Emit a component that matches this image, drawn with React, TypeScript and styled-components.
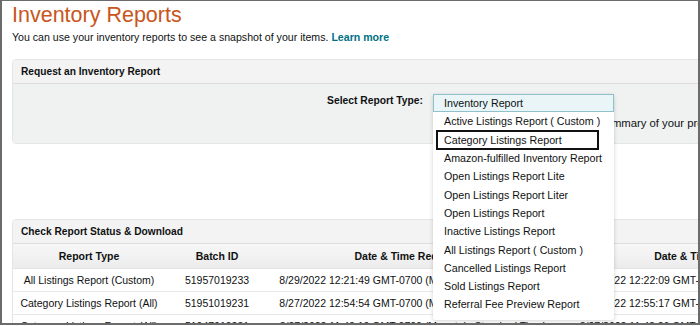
import React from 'react'
import styled, { createGlobalStyle } from 'styled-components'

const GlobalStyle = createGlobalStyle`
  html, body {
    margin: 0;
    padding: 0;
    background: #ffffff;
  }
  body {
    font-family: "Liberation Sans", Arial, sans-serif;
    color: #0f1111;
  }
`

const Frame = styled.div`
  box-sizing: border-box;
  width: 700px;
  height: 325px;
  border: 2px solid #6b6b6b;
  border-top-width: 1px;
  overflow: hidden;
  padding: 0 0 0 10px;
`

const Title = styled.h1`
  margin: 0;
  padding-top: 1px;
  font-size: 21.5px;
  line-height: 26px;
  font-weight: 400;
  color: #c8561c;
`

const Intro = styled.p`
  margin: 2px 0 0;
  font-size: 10.6px;
  line-height: 14px;
  color: #0f1111;
`

const LearnMore = styled.a`
  color: #007185;
  font-weight: 700;
  text-decoration: none;
`

const Panel = styled.section<{ $top: number }>`
  margin-top: ${(p) => p.$top}px;
  margin-right: -12px;
  border: 1px solid #e3e6e6;
  border-radius: 4px;
  background: #ffffff;
`

const PanelHeader = styled.div`
  height: 23px;
  display: flex;
  align-items: center;
  padding-left: 8px;
  background: #f3f3f3;
  border-bottom: 1px solid #dddddd;
  border-radius: 4px 4px 0 0;
  font-size: 10.2px;
  font-weight: 700;
`

const RequestBody = styled.div`
  height: 59px;
  background: #f0f2f2;
  border-radius: 0 0 4px 4px;
  display: grid;
  grid-template-columns: 410px 1fr;
  column-gap: 10px;
  padding-top: 10px;
  box-sizing: border-box;
`

const FieldLabel = styled.div`
  text-align: right;
  font-size: 10.3px;
  font-weight: 700;
  line-height: 14px;
`

const SelectArea = styled.div`
  position: relative;
  font-size: 10.5px;
`

const Hint = styled.div`
  margin-top: 22px;
  padding-left: 10px;
  white-space: nowrap;
  font-size: 11.3px;
  line-height: 14px;
`

const ListBox = styled.ul`
  position: absolute;
  left: 0;
  top: 0;
  width: 181px;
  margin: 0;
  padding: 0 0 6px;
  list-style: none;
  background: #ffffff;
  border-radius: 3px;
  box-shadow: 0 1px 4px rgba(0, 0, 0, 0.18);
  z-index: 5;
`

const Option = styled.li<{ $selected?: boolean; $boxed?: boolean }>`
  box-sizing: border-box;
  height: 18.3px;
  display: flex;
  align-items: center;
  padding-left: 10px;
  font-size: 10.7px;
  white-space: nowrap;
  color: #0f1111;
  background: ${(p) => (p.$selected ? '#e9f5f7' : 'transparent')};
  border: 1px solid ${(p) => (p.$selected ? '#8fc1ca' : 'transparent')};
  ${(p) =>
    p.$boxed &&
    `
    outline: 2px solid #111;
    outline-offset: -1px;
    margin: 0 16px 0 4px;
    padding-left: 6px;
  `}
`

const TableWrap = styled.div`
  overflow: hidden;
`

const Table = styled.table`
  border-collapse: collapse;
  table-layout: fixed;
  width: 856px;
  font-size: 10.5px;
`

const HeadCell = styled.th<{ $w: number }>`
  width: ${(p) => p.$w}px;
  height: 24px;
  padding: 0;
  font-weight: 700;
  text-align: center;
  white-space: nowrap;
  background: linear-gradient(#f7f7f7, #ececec);
  border-bottom: 1px solid #e3e3e3;
`

const Cell = styled.td`
  height: 22px;
  padding: 0;
  text-align: center;
  white-space: nowrap;
  overflow: hidden;
  border-bottom: 1px solid #e7e7e7;
`

const options = [
  'Inventory Report',
  'Active Listings Report ( Custom )',
  'Category Listings Report',
  'Amazon-fulfilled Inventory Report',
  'Open Listings Report Lite',
  'Open Listings Report Liter',
  'Open Listings Report',
  'Inactive Listings Report',
  'All Listings Report ( Custom )',
  'Cancelled Listings Report',
  'Sold Listings Report',
  'Referral Fee Preview Report',
]

const columns = [
  { name: 'Report Type', w: 152 },
  { name: 'Batch ID', w: 104 },
  { name: 'Date & Time Requested', w: 288 },
  { name: 'Date & Time Completed', w: 312 },
]

const rows = [
  {
    type: 'All Listings Report (Custom)',
    batch: '51957019233',
    requested: '8/29/2022 12:21:49 GMT-0700 (Mountain Standard Time)',
    completed: '8/29/2022 12:22:09 GMT-0700 (Mountain Standard Time)',
  },
  {
    type: 'Category Listings Report (All)',
    batch: '51951019231',
    requested: '8/27/2022 12:54:54 GMT-0700 (Mountain Standard Time)',
    completed: '8/27/2022 12:55:17 GMT-0700 (Mountain Standard Time)',
  },
  {
    type: 'Category Listings Report (All)',
    batch: '51947019231',
    requested: '8/27/2022 11:43:10 GMT-0700 (Mountain Standard Time)',
    completed: '8/27/2022 11:43:26 GMT-0700 (Mountain Standard Time)',
  },
]

export default function App() {
  return (
    <>
      <GlobalStyle />
      <Frame>
        <Title>Inventory Reports</Title>
        <Intro>
          You can use your inventory reports to see a snapshot of your items.{' '}
          <LearnMore href="#">Learn more</LearnMore>
        </Intro>

        <Panel $top={15}>
          <PanelHeader>Request an Inventory Report</PanelHeader>
          <RequestBody>
            <FieldLabel>Select Report Type:</FieldLabel>
            <SelectArea>
              <Hint>This report provides you with a summary of your products and their quantities.</Hint>
              <ListBox>
                {options.map((o, i) => (
                  <Option key={o} $selected={i === 0} $boxed={i === 2}>
                    {o}
                  </Option>
                ))}
              </ListBox>
            </SelectArea>
          </RequestBody>
        </Panel>

        <Panel $top={75}>
          <PanelHeader>Check Report Status &amp; Download</PanelHeader>
          <TableWrap>
            <Table>
              <thead>
                <tr>
                  {columns.map((c) => (
                    <HeadCell key={c.name} $w={c.w}>
                      {c.name}
                    </HeadCell>
                  ))}
                </tr>
              </thead>
              <tbody>
                {rows.map((r) => (
                  <tr key={r.batch}>
                    <Cell>{r.type}</Cell>
                    <Cell>{r.batch}</Cell>
                    <Cell>{r.requested}</Cell>
                    <Cell>{r.completed}</Cell>
                  </tr>
                ))}
              </tbody>
            </Table>
          </TableWrap>
        </Panel>
      </Frame>
    </>
  )
}
